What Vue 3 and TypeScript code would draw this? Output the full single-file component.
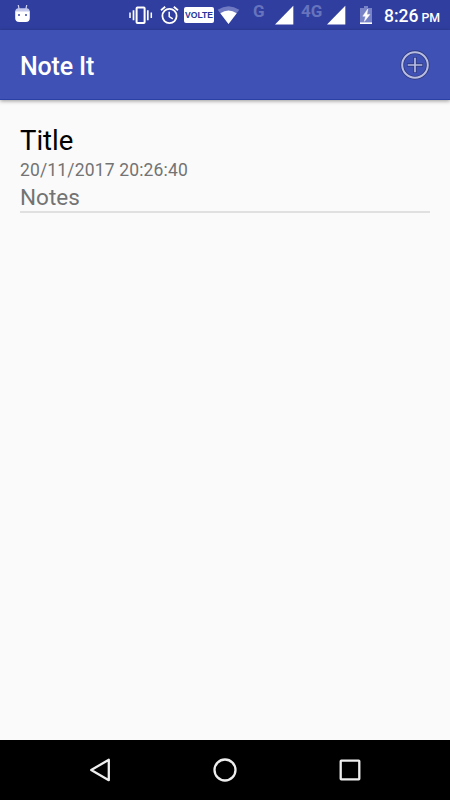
<script setup lang="ts">
interface Note {
  id: number
  title: string
  created: string
  body: string
}

const notes: Note[] = [
  { id: 1, title: 'Title', created: '20/11/2017 20:26:40', body: 'Notes' },
]
</script>

<template>
  <div class="screen">
    <header class="status">
      <svg class="debug" viewBox="14 0 18 30" width="18" height="30">
        <path d="M18.3 5l.9 5M26.7 5l-.9 5" stroke="#c9cdec" stroke-width="1.3" />
        <path d="M15.2 12Q15.2 8.2 18.5 8.2H26.5Q29.8 8.2 29.8 12Z" fill="#c5caed" />
        <path d="M15.2 11.6H29.8V18Q29.8 22 25.8 22H19.2Q15.2 22 15.2 18Z" fill="#fff" />
        <path d="M18 14h2v2h-2zM25 14h2v2h-2z" fill="#6975c1" />
      </svg>
      <svg class="vibrate" viewBox="128 0 26 30" width="26" height="30" fill="none" stroke="#fff">
        <rect x="136.6" y="7.5" width="8" height="15.6" rx=".8" stroke-width="2" />
        <path d="M133.5 10.3v10M147.8 10.3v10" stroke-width="1.7" />
        <path d="M130 12.5v5.4M151.3 12.5v5.4" stroke-width="1.5" />
      </svg>
      <svg class="alarm" viewBox="159 0 21 30" width="21" height="30" fill="none" stroke="#fff">
        <circle cx="169.5" cy="16" r="7.1" stroke-width="1.8" />
        <path d="M161 10.2l4.2-3.5M178 10.2l-4.2-3.5" stroke-width="1.8" />
        <path d="M169.2 11.8v4.8l3.6 2.2" stroke-width="1.5" />
      </svg>
      <span class="volte">VOLTE</span>
      <svg class="wifi" viewBox="217 0 23 30" width="23" height="30">
        <path d="M217.7 9.8Q228.5 2.8 239.3 9.8L228.5 24Z" fill="#6f7ac2" />
        <path d="M220.3 13.2Q228.5 7.8 236.7 13.2L228.5 24Z" fill="#fff" />
      </svg>
      <span class="network g">G</span>
      <svg class="signal" viewBox="0 0 19 30" width="19" height="30">
        <path d="M0 24.5L18.3 5.8V24.5Z" fill="#fff" />
      </svg>
      <span class="network fourg">4G</span>
      <svg class="signal second" viewBox="0 0 19 30" width="19" height="30">
        <path d="M0 24.5L18.3 5.8V24.5Z" fill="#fff" />
      </svg>
      <svg class="battery" viewBox="359 0 14 30" width="14" height="30">
        <path d="M364 6h4v2h4v16h-12V8h4z" fill="#7882c6" />
        <path d="M360 22.4h12v1.6h-12z" fill="#fff" />
        <path d="M367.8 9l-5 7.2h2.8l-1.2 5.2 5.5-7h-3z" fill="#fff" stroke="#fff" stroke-width=".5" />
      </svg>
      <span class="clock">8:26<small>PM</small></span>
    </header>

    <div class="toolbar">
      <h1>Note It</h1>
      <button class="add" aria-label="Add note">
        <svg viewBox="0 0 30 30" width="30" height="30" fill="none">
          <circle cx="15" cy="15" r="12.8" stroke="#303b80" stroke-width="3.7" />
          <path d="M7 15h16M15 7v16" stroke="#303b80" stroke-width="3.4" />
          <circle cx="15" cy="15" r="12.8" stroke="#b8bde2" stroke-width="2" />
          <path d="M7.7 15h14.6M15 7.7v14.6" stroke="#b8bde2" stroke-width="1.7" />
        </svg>
      </button>
    </div>

    <main class="content">
      <article v-for="note in notes" :key="note.id" class="note">
        <h2>{{ note.title }}</h2>
        <time>{{ note.created }}</time>
        <p>{{ note.body }}</p>
      </article>
    </main>

    <nav class="navbar">
      <svg viewBox="0 0 30 30" width="30" height="30">
        <path d="M6.2 15L23.8 4.8V25.2Z" />
      </svg>
      <svg viewBox="0 0 30 30" width="30" height="30">
        <circle cx="15" cy="15" r="10.5" />
      </svg>
      <svg viewBox="0 0 30 30" width="30" height="30">
        <rect x="5.7" y="5.7" width="18.6" height="18.6" rx=".6" />
      </svg>
    </nav>
  </div>
</template>

<style>
body {
  margin: 0;
}
</style>

<style scoped>
.screen {
  display: flex;
  flex-direction: column;
  width: 450px;
  height: 800px;
  overflow: hidden;
  background: #fafafa;
  font-family: Roboto, "Liberation Sans", sans-serif;
}

svg {
  display: block;
  flex: none;
}

.status {
  display: flex;
  flex: none;
  height: 30px;
  padding-left: 14px;
  background: #303f9f;
  color: #fff;
  white-space: nowrap;
}

.vibrate {
  margin-left: 96px;
}

.alarm {
  margin-left: 5px;
}

.volte {
  box-sizing: border-box;
  flex: none;
  width: 30px;
  height: 16px;
  margin: 7px 3px 0 4px;
  border-radius: 2px;
  background: #fff;
  color: #26359a;
  font-family: "Liberation Sans", sans-serif;
  font-size: 8.6px;
  font-weight: 700;
  line-height: 16px;
  text-align: center;
}

.network {
  flex: none;
  color: #6773bd;
  font-size: 17px;
  font-weight: 700;
  line-height: 22px;
}

.g {
  width: 22px;
  margin-left: 13px;
}

.fourg {
  width: 26px;
  margin-left: 7px;
}

.battery {
  margin-left: 13px;
}

.clock {
  margin-left: 11px;
  font-size: 17.5px;
  font-weight: 500;
  line-height: 32px;
}

.clock small {
  margin-left: 3px;
  font-size: 12.3px;
}

.toolbar {
  display: flex;
  flex: none;
  align-items: center;
  justify-content: space-between;
  box-sizing: border-box;
  height: 70px;
  padding: 0 20px;
  border-bottom: 1px solid #2a40a5;
  background: #3f51b5;
  box-shadow: 0 1px 4px rgba(0, 0, 0, 0.4);
}

h1 {
  margin: 5px 0 0;
  color: #fff;
  font-size: 25px;
  font-weight: 500;
  letter-spacing: -0.15px;
  line-height: 30px;
}

.add {
  margin: 1px 0 0;
  padding: 0;
  border: 0;
  background: none;
}

.content {
  flex: 1;
  padding: 20px;
}

.note {
  border-bottom: 2px solid #e0e0e0;
}

h2,
p {
  margin: 0;
  font-weight: 400;
}

h2 {
  padding-top: 4px;
  color: #000;
  font-size: 27.5px;
  line-height: 34px;
}

time,
p {
  display: block;
  color: #737373;
}

time {
  font-size: 17.5px;
  letter-spacing: 0.16px;
  line-height: 25px;
}

p {
  height: 28px;
  font-size: 22.5px;
  line-height: 29px;
}

.navbar {
  display: flex;
  flex: none;
  align-items: center;
  justify-content: space-between;
  box-sizing: border-box;
  height: 60px;
  padding: 0 85px;
  background: #000;
  fill: none;
  stroke: #eee;
  stroke-width: 2.3;
  stroke-linejoin: round;
}
</style>
